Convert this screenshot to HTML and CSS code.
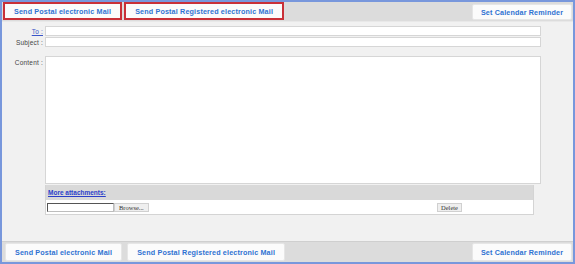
FILE: index.html
```html
<!DOCTYPE html>
<html lang="en">
<head>
    <meta charset="UTF-8">
    <title>Send Postal electronic Mail</title>
    <link rel="stylesheet" href="styles.css">
</head>
<body>
    <div class="frame">
        <div class="toolbar top_bar">
            <button class="tool_button marked">Send Postal electronic Mail</button>
            <button class="tool_button marked">Send Postal Registered electronic Mail</button>
            <span class="spacer"></span>
            <button class="tool_button">Set Calendar Reminder</button>
        </div>

        <div class="mail_form">
            <a href="#" class="field_label to_label">To :</a>
            <input type="text" class="field_input">

            <label class="field_label">Subject :</label>
            <input type="text" class="field_input">

            <label class="field_label content_label">Content :</label>
            <textarea class="content_input"></textarea>

            <div class="attachments">
                <div class="attach_head"><a href="#">More attachments:</a></div>
                <div class="attach_row">
                    <span class="file_box"></span>
                    <span class="small_button">Browse...</span>
                    <span class="spacer"></span>
                    <span class="small_button delete_button">Delete</span>
                </div>
            </div>
        </div>

        <div class="toolbar bottom_bar">
            <button class="tool_button">Send Postal electronic Mail</button>
            <button class="tool_button">Send Postal Registered electronic Mail</button>
            <span class="spacer"></span>
            <button class="tool_button">Set Calendar Reminder</button>
        </div>
    </div>
</body>
</html>
```

FILE: styles.css
```css
body {
    margin: 0;
    font-family: 'Liberation Sans', Arial, sans-serif;
}

.frame {
    width: 575px;
    height: 264px;
    box-sizing: border-box;
    border: 2px solid #7897dc;
    background-color: #f1f1f1;
    display: flex;
    flex-direction: column;
}

.toolbar {
    display: flex;
    align-items: stretch;
    background-color: #dcdcdc;
    height: 20px;
    box-sizing: border-box;
}

.top_bar {
    border-bottom: 1px solid #e8e8e8;
    padding: 0 1px 1px 1px;
    gap: 2px;
}

.bottom_bar {
    margin-top: auto;
    height: 21px;
    border-top: 1px solid #cfcfcf;
    padding: 1px 1px 1px 3px;
    gap: 5px;
}

.spacer {
    flex: 1;
}

.tool_button {
    background-color: #fbfbfb;
    border: 1px solid #e6e6e6;
    border-radius: 2px;
    color: #2f72d2;
    font-family: 'Liberation Sans', Arial, sans-serif;
    font-weight: bold;
    font-size: 7.2px;
    letter-spacing: 0.15px;
    white-space: nowrap;
    padding: 0 9px;
    margin: 0;
    cursor: pointer;
}

.top_bar .tool_button {
    margin-top: 2px;
}

.top_bar .tool_button.marked {
    margin-top: 0;
    border: 2px solid #c93038;
    border-radius: 0;
    padding: 0 9px;
}

.top_bar .tool_button:last-child,
.bottom_bar .tool_button:last-child {
    width: 100px;
    padding: 0;
}

.mail_form {
    display: grid;
    grid-template-columns: 41px 496px;
    column-gap: 2px;
    row-gap: 1px;
    padding-top: 4px;
    align-items: center;
}

.field_label {
    font-size: 6.5px;
    font-weight: normal;
    letter-spacing: 0.2px;
    color: #444;
    text-align: right;
}

.to_label {
    color: #3a55c8;
    text-decoration: underline;
}

.field_input {
    height: 10px;
    box-sizing: border-box;
    margin: 0;
    padding: 0;
    border: 1px solid #d6d6d6;
    background-color: #fff;
}

.content_label {
    align-self: start;
    margin-top: 11px;
}

.content_input {
    margin: 8px 0 0 0;
    height: 128px;
    box-sizing: border-box;
    border: 1px solid #d6d6d6;
    background-color: #fff;
    resize: none;
}

.attachments {
    grid-column: 2;
    width: 489px;
    border: 1px solid #d4d4d4;
    border-top: none;
    box-sizing: border-box;
    background-color: #fff;
}

.attach_head {
    background-color: #d9d9d9;
    height: 15px;
    padding-left: 2px;
    display: flex;
    align-items: center;
}

.attach_head a {
    font-size: 6.5px;
    font-weight: bold;
    color: #2b3fc9;
}

.attach_row {
    display: flex;
    align-items: center;
    height: 14px;
    padding: 0 0 0 1px;
}

.file_box {
    width: 67px;
    height: 9px;
    box-sizing: border-box;
    border: 1px solid #bdbdbd;
    border-top-color: #555;
    border-left-color: #555;
    background-color: #fff;
}

.small_button {
    font-family: 'Liberation Serif', 'Times New Roman', serif;
    font-size: 6.5px;
    color: #333;
    background-color: #efefef;
    border: 1px solid #d0d0d0;
    height: 9px;
    box-sizing: border-box;
    padding: 0 4px;
    display: flex;
    align-items: center;
}

.small_button:first-of-type {
    width: 36px;
}

.delete_button {
    width: 25px;
    justify-content: center;
    margin-right: 71px;
}
```
